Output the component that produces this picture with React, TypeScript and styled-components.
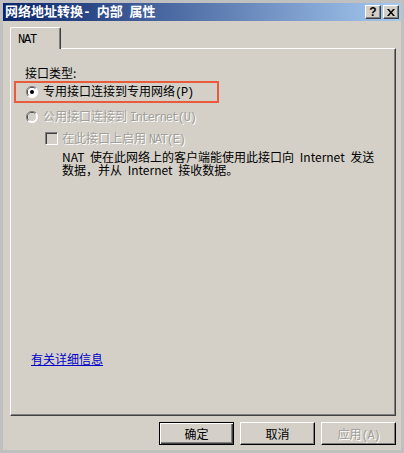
import React from "react";
import styled, { createGlobalStyle } from "styled-components";

const cjk = `"Noto Sans CJK SC", "Noto Sans", sans-serif`;

const Global = createGlobalStyle`
  body {
    margin: 0;
    font-family: ${cjk};
    font-size: 12px;
  }
`;

const Window = styled.div`
  width: 404px;
  height: 453px;
  box-sizing: border-box;
  border: 3px solid #c0c0c0;
  background: #d4d0c8;
  display: flex;
  flex-direction: column;
`;

const TitleBar = styled.div`
  height: 18px;
  flex-shrink: 0;
  display: flex;
  align-items: center;
  padding: 0 2px;
  background: linear-gradient(to right, #0a246a, #a6caf0);
`;

const Title = styled.span`
  flex: 1;
  color: #fff;
  font-weight: bold;
  font-size: 13px;
  line-height: 18px;
  white-space: pre;
`;

const TitleGap = styled.span`
  font-family: "Liberation Mono", monospace;
  font-size: 13px;
  letter-spacing: -1px;
`;

const TitleButtons = styled.div`
  display: flex;
  gap: 2px;
`;

const TitleButton = styled.div`
  width: 16px;
  height: 14px;
  box-sizing: border-box;
  background: #d4d0c8;
  border-top: 1px solid #fff;
  border-left: 1px solid #fff;
  border-right: 1px solid #404040;
  border-bottom: 1px solid #404040;
  box-shadow: inset -1px -1px #808080;
  display: flex;
  align-items: center;
  justify-content: center;
  font-family: "Liberation Sans", sans-serif;
  font-weight: bold;
  font-size: 12px;
  line-height: 12px;
  color: #000;
`;

const Body = styled.div`
  flex: 1;
  display: flex;
  flex-direction: column;
  padding: 6px 5px 5px 7px;
`;

const TabStrip = styled.div`
  display: flex;
  height: 21px;
`;

const Tab = styled.div`
  position: relative;
  z-index: 1;
  width: 51px;
  height: 22px;
  box-sizing: border-box;
  background: #d4d0c8;
  border-top: 1px solid #fff;
  border-left: 1px solid #fff;
  border-right: 1px solid #404040;
  border-radius: 2px 2px 0 0;
  box-shadow: inset -1px 0 #808080;
  padding: 3px 0 0 7px;
  line-height: 14px;
`;

const Panel = styled.div`
  height: 368px;
  box-sizing: border-box;
  border-top: 1px solid #fff;
  border-left: 1px solid #fff;
  border-right: 1px solid #404040;
  border-bottom: 1px solid #404040;
  box-shadow: inset -1px -1px #808080;
  display: flex;
  flex-direction: column;
  padding: 17px 14px 50px 14px;
`;

const Lat = styled.span`
  font-family: "Liberation Mono", monospace;
  font-size: 12px;
  letter-spacing: -1.2px;
`;

const Line = styled.div`
  line-height: 13px;
  height: 13px;
  color: #000;
  white-space: pre;
`;

const Highlight = styled.div`
  width: 205px;
  height: 22px;
  box-sizing: border-box;
  margin: 2px 0 0 -11px;
  border: 2px solid #ea5a3c;
  display: flex;
  align-items: center;
  padding-left: 10px;
`;

const OptionRow = styled.div<{ $disabled?: boolean; $indent?: number; $gap?: number }>`
  display: flex;
  align-items: center;
  height: 13px;
  line-height: 13px;
  gap: 5px;
  margin-left: ${(p) => p.$indent ?? 0}px;
  margin-top: ${(p) => p.$gap ?? 0}px;
  white-space: pre;
  color: ${(p) => (p.$disabled ? "#a19f9a" : "#000")};
  text-shadow: ${(p) => (p.$disabled ? "1px 1px #fff" : "none")};
`;

const CheckBox = styled.div`
  width: 13px;
  height: 13px;
  box-sizing: border-box;
  flex-shrink: 0;
  margin-right: -1px;
  background: #d4d0c8;
  border-top: 1px solid #808080;
  border-left: 1px solid #808080;
  border-right: 1px solid #fff;
  border-bottom: 1px solid #fff;
  box-shadow: inset 1px 1px #404040, inset -1px -1px #d4d0c8;
`;

const Description = styled.div`
  margin: 5px 0 0 37px;
  line-height: 13px;
  color: #000;
  white-space: pre;
  word-spacing: 3px;
`;

const MoreInfo = styled.a`
  margin: auto 0 0 6px;
  line-height: 13px;
  color: #0000c8;
  text-decoration: underline;
  cursor: pointer;
  align-self: flex-start;
`;

const ButtonRow = styled.div`
  display: flex;
  justify-content: flex-end;
  gap: 6px;
  padding-top: 6px;
`;

const Button = styled.button<{ $default?: boolean }>`
  width: 75px;
  height: 23px;
  box-sizing: border-box;
  padding: 0;
  background: #d4d0c8;
  font-family: ${cjk};
  font-size: 12px;
  color: #000;
  border-top: 1px solid ${(p) => (p.$default ? "#000" : "#fff")};
  border-left: 1px solid ${(p) => (p.$default ? "#000" : "#fff")};
  border-right: 1px solid #000;
  border-bottom: 1px solid #000;
  box-shadow: ${(p) =>
    p.$default
      ? "inset 1px 1px #fff, inset -1px -1px #404040, inset -2px -2px #808080"
      : "inset -1px -1px #808080"};
  &:disabled {
    color: #a19f9a;
    text-shadow: 1px 1px #fff;
  }
`;

function Radio({ checked, disabled }: { checked?: boolean; disabled?: boolean }) {
  return (
    <svg width="12" height="12" viewBox="0 0 12 12" style={{ flexShrink: 0 }}>
      <circle cx="6" cy="6" r="5.5" fill="#fff" />
      <path d="M10 2 A5.5 5.5 0 0 0 2 10" fill="none" stroke="#808080" strokeWidth="1" />
      <path d="M9.3 2.7 A4.6 4.6 0 0 0 2.7 9.3" fill="none" stroke="#404040" strokeWidth="1" />
      <path d="M2 10 A5.5 5.5 0 0 0 10 2" fill="none" stroke="#fff" strokeWidth="1" />
      <circle cx="6" cy="6" r="4" fill={disabled ? "#d4d0c8" : "#fff"} />
      {checked && <circle cx="6" cy="6" r="2" fill="#000" />}
    </svg>
  );
}

function CloseGlyph() {
  return (
    <svg width="8" height="7" viewBox="0 0 8 7">
      <path d="M0 0 L2 0 L4 2.5 L6 0 L8 0 L5 3.5 L8 7 L6 7 L4 4.5 L2 7 L0 7 L3 3.5 Z" fill="#000" />
    </svg>
  );
}

export default function App() {
  return (
    <>
      <Global />
      <Window>
        <TitleBar>
          <Title>
            网络地址转换<TitleGap>- </TitleGap>内部<TitleGap> </TitleGap>属性
          </Title>
          <TitleButtons>
            <TitleButton>?</TitleButton>
            <TitleButton>
              <CloseGlyph />
            </TitleButton>
          </TitleButtons>
        </TitleBar>
        <Body>
          <TabStrip>
            <Tab>
              <Lat>NAT</Lat>
            </Tab>
          </TabStrip>
          <Panel>
            <Line>接口类型:</Line>
            <Highlight>
              <OptionRow>
                <Radio checked />
                <span>
                  专用接口连接到专用网络<Lat>(P)</Lat>
                </span>
              </OptionRow>
            </Highlight>
            <OptionRow $disabled $indent={1} $gap={7}>
              <Radio disabled />
              <span>
                公用接口连接到 <Lat>Internet(U)</Lat>
              </span>
            </OptionRow>
            <OptionRow $disabled $indent={20} $gap={9}>
              <CheckBox />
              <span>
                在此接口上启用 <Lat>NAT(E)</Lat>
              </span>
            </OptionRow>
            <Description>
              {"NAT 使在此网络上的客户端能使用此接口向 Internet 发送\n数据，并从 Internet 接收数据。"}
            </Description>
            <MoreInfo>有关详细信息</MoreInfo>
          </Panel>
          <ButtonRow>
            <Button $default>确定</Button>
            <Button>取消</Button>
            <Button disabled>
              应用<Lat>(A)</Lat>
            </Button>
          </ButtonRow>
        </Body>
      </Window>
    </>
  );
}
